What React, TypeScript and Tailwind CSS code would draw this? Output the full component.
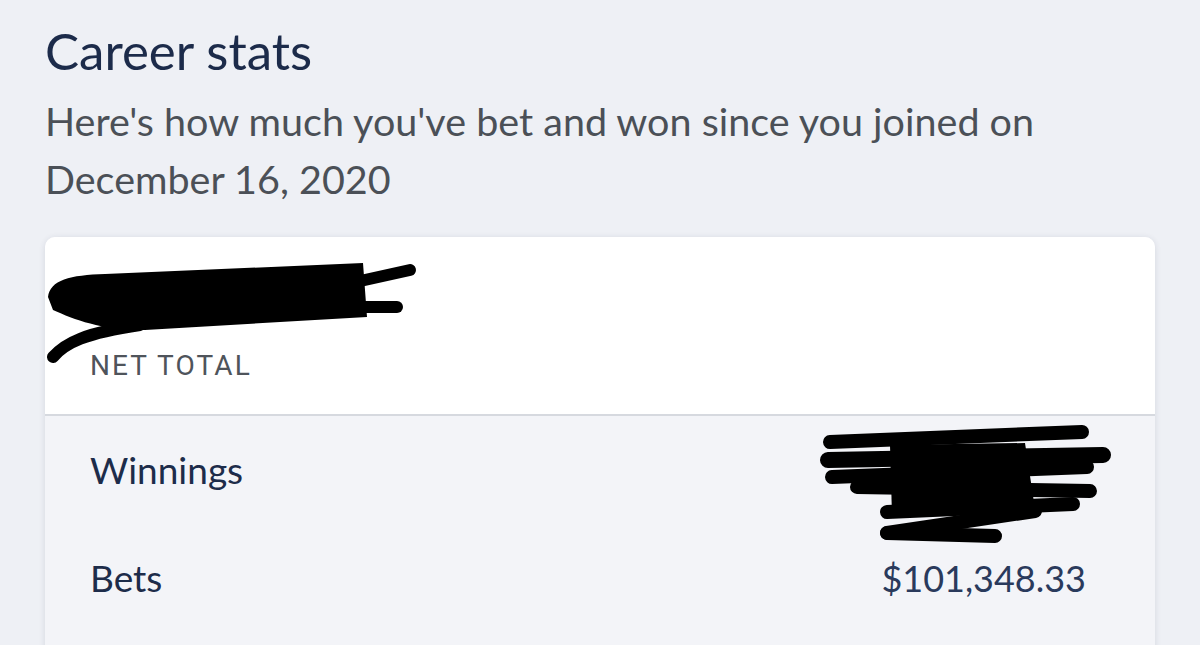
export default function App() {
  return (
    <main className="w-[1200px] h-[645px] overflow-hidden bg-[#eef0f5] px-[45px] pt-[20px] font-['Lato',sans-serif]">
      <h1 className="text-[51px] leading-[62px] text-[#1c2b4a]">Career stats</h1>
      <p className="mt-[10px] text-[39.5px] leading-[58px] text-[#4b5057]">
        Here's how much you've bet and won since you joined on
        <br />
        December 16, 2020
      </p>

      <section className="mt-[29px] h-[460px] rounded-[10px] bg-[#f3f4f8] shadow-[0_1px_6px_rgba(30,40,70,0.12)] overflow-hidden">
        <div className="relative h-[179px] bg-white border-b-2 border-[#d6d9df] px-[45px] flex flex-col justify-end pb-[33px]">
          <svg className="absolute left-0 top-[18px]" width="380" height="110" viewBox="0 0 380 110">
            <path d="M 3 42 C 5 25 25 20 60 19 L 318 8 L 322 62 L 100 75 C 60 76 30 65 8 55 Z" fill="#000" />
            <g stroke="#000" strokeWidth="12" strokeLinecap="round" fill="none">
              <path d="M 252 40 L 365 15" />
              <path d="M 252 52 L 352 52" />
              <path d="M 8 102 C 20 88 40 78 95 70" />
            </g>
          </svg>
          <span className="text-[28px] leading-[30px] tracking-[0.075em] text-[#4f545b] font-['Roboto',sans-serif]">NET TOTAL</span>
        </div>

        <div className="relative h-[108px] flex items-center justify-between pl-[45px] pr-[69px] text-[37px] text-[#1d2c4a]">
          <span>Winnings</span>
          <svg className="absolute right-[43px] top-[9px]" width="292" height="120" viewBox="0 0 292 120">
            <path d="M 70 20 L 205 18 L 215 84 L 72 90 Z" fill="#000" />
            <g stroke="#000" strokeWidth="14" strokeLinecap="round" fill="none">
              <path d="M 10 17 L 262 7" />
              <path d="M 8 35 L 283 30" strokeWidth="16" />
              <path d="M 12 52 L 267 42" />
              <path d="M 37 62 L 270 66" />
              <path d="M 67 87 L 253 79" />
              <path d="M 67 108 L 215 86" />
              <path d="M 67 108 L 175 111" />
            </g>
          </svg>
        </div>

        <div className="h-[108px] flex items-center justify-between pl-[45px] pr-[69px]">
          <span className="text-[37px] text-[#1d2c4a]">Bets</span>
          <span className="text-[36px] text-[#2a3a5c]">$101,348.33</span>
        </div>
      </section>
    </main>
  );
}
